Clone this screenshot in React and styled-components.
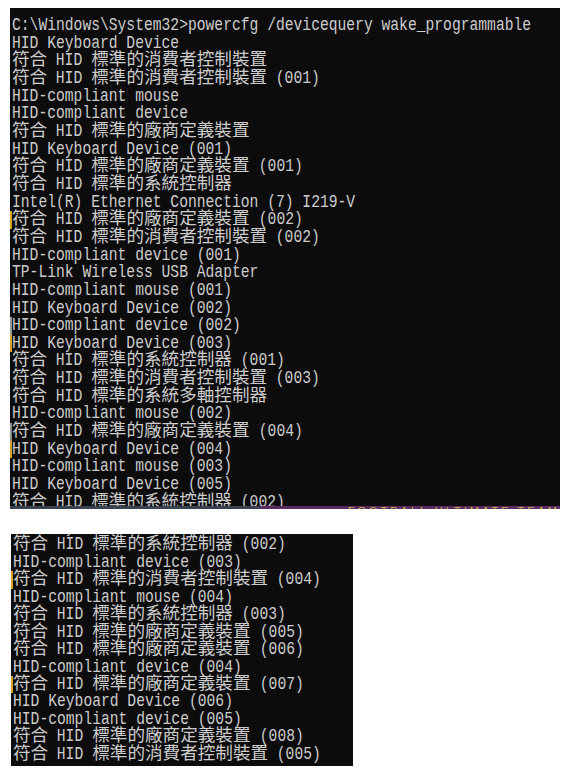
import styled, { createGlobalStyle } from "styled-components";

const CELL = 8.8;

const GlobalStyle = createGlobalStyle`
  html, body {
    margin: 0;
    padding: 0;
    background: #ffffff;
  }
`;

const topLines = [
  { text: "C:\\Windows\\System32>powercfg /devicequery wake_programmable" },
  { text: "HID Keyboard Device" },
  { text: "符合 HID 標準的消費者控制裝置" },
  { text: "符合 HID 標準的消費者控制裝置 (001)" },
  { text: "HID-compliant mouse" },
  { text: "HID-compliant device" },
  { text: "符合 HID 標準的廠商定義裝置" },
  { text: "HID Keyboard Device (001)" },
  { text: "符合 HID 標準的廠商定義裝置 (001)" },
  { text: "符合 HID 標準的系統控制器" },
  { text: "Intel(R) Ethernet Connection (7) I219-V" },
  { text: "符合 HID 標準的廠商定義裝置 (002)", mark: "#d9a21c" },
  { text: "符合 HID 標準的消費者控制裝置 (002)" },
  { text: "HID-compliant device (001)" },
  { text: "TP-Link Wireless USB Adapter" },
  { text: "HID-compliant mouse (001)" },
  { text: "HID Keyboard Device (002)" },
  { text: "HID-compliant device (002)", mark: "#9a9a9a" },
  { text: "HID Keyboard Device (003)", mark: "#d9a21c" },
  { text: "符合 HID 標準的系統控制器 (001)" },
  { text: "符合 HID 標準的消費者控制裝置 (003)" },
  { text: "符合 HID 標準的系統多軸控制器" },
  { text: "HID-compliant mouse (002)" },
  { text: "符合 HID 標準的廠商定義裝置 (004)", mark: "#8c8c8c" },
  { text: "HID Keyboard Device (004)", mark: "#d9a21c" },
  { text: "HID-compliant mouse (003)" },
  { text: "HID Keyboard Device (005)" },
  { text: "符合 HID 標準的系統控制器 (002)" },
];

const bottomLines = [
  { text: "HID Keyboard Device (005)" },
  { text: "符合 HID 標準的系統控制器 (002)" },
  { text: "HID-compliant device (003)" },
  { text: "符合 HID 標準的消費者控制裝置 (004)", mark: "#d9a21c" },
  { text: "HID-compliant mouse (004)" },
  { text: "符合 HID 標準的系統控制器 (003)" },
  { text: "符合 HID 標準的廠商定義裝置 (005)" },
  { text: "符合 HID 標準的廠商定義裝置 (006)" },
  { text: "HID-compliant device (004)" },
  { text: "符合 HID 標準的廠商定義裝置 (007)", mark: "#d9a21c" },
  { text: "HID Keyboard Device (006)" },
  { text: "HID-compliant device (005)" },
  { text: "符合 HID 標準的廠商定義裝置 (008)" },
  { text: "符合 HID 標準的消費者控制裝置 (005)" },
];

// split a line into runs of wide (CJK) and narrow (ascii) characters
const splitRuns = (text) => {
  const runs = [];
  const re = /[\u3000-\u9fff\uff00-\uffef]+/g;
  let last = 0;
  let m;
  while ((m = re.exec(text)) !== null) {
    if (m.index > last) runs.push({ wide: false, s: text.slice(last, m.index) });
    runs.push({ wide: true, s: m[0] });
    last = m.index + m[0].length;
  }
  if (last < text.length) runs.push({ wide: false, s: text.slice(last) });
  return runs;
};

const ConsoleLine = ({ text, mark, pitch }) => (
  <Line $mark={mark} $pitch={pitch}>
    {splitRuns(text).map((r, i) =>
      r.wide ? (
        <Han key={i}>{r.s}</Han>
      ) : (
        <Narrow key={i} $n={r.s.length}>
          {r.s}
        </Narrow>
      )
    )}
  </Line>
);

const App = () => {
  return (
    <Page>
      <GlobalStyle />
      <TopShot>
        <Screen $pad="9px">
          {topLines.map((l, i) => (
            <ConsoleLine key={i} text={l.text} mark={l.mark} pitch={17.67} />
          ))}
        </Screen>
        <Taskbar>
          <TaskLeft />
          <TaskRight>FOOTBALL ULTIMATE TEAM</TaskRight>
        </Taskbar>
      </TopShot>

      <BottomShot>
        <Screen $pad="0" $shift="-15px">
          {bottomLines.map((l, i) => (
            <ConsoleLine key={i} text={l.text} mark={l.mark} pitch={17.45} />
          ))}
        </Screen>
      </BottomShot>
    </Page>
  );
};

const Page = styled.div`
  display: flex;
  flex-direction: column;
  align-items: flex-start;
  width: 567px;
  min-height: 782px;
`;

const TopShot = styled.div`
  margin: 8px 0 0 10px;
  width: 550px;
  display: flex;
  flex-direction: column;
`;

const BottomShot = styled.div`
  margin: 25px 0 0 11px;
  width: 342px;
  height: 232px;
  background: #0c0c0c;
  overflow: hidden;
`;

const Screen = styled.div`
  background: #0c0c0c;
  height: ${(p) => (p.$shift ? "auto" : "498px")};
  overflow: hidden;
  padding-top: ${(p) => p.$pad};
  margin-top: ${(p) => p.$shift || "0"};
  box-sizing: border-box;
`;

const Line = styled.div`
  height: ${(p) => p.$pitch}px;
  line-height: ${(p) => p.$pitch}px;
  border-left: 2px solid ${(p) => p.$mark || "transparent"};
  font-family: "Liberation Mono", monospace;
  font-size: 17.6px;
  color: #cccccc;
  white-space: pre;
`;

const Narrow = styled.span`
  display: inline-block;
  width: ${(p) => p.$n * CELL}px;
  transform: scaleX(0.8333);
  transform-origin: 0 0;
  white-space: pre;
  font-family: "Liberation Mono", monospace;
`;

const Han = styled.span`
  font-family: "Noto Sans CJK TC", "Noto Sans CJK JP", sans-serif;
  font-size: 17.6px;
  line-height: 0;
  letter-spacing: 0;
`;

const Taskbar = styled.div`
  display: flex;
  height: 3px;
  overflow: hidden;
`;

const TaskLeft = styled.div`
  width: 358px;
  background: #3a4152;
`;

const TaskRight = styled.div`
  flex: 1;
  background: #5a2a62;
  color: #c9b23a;
  font-family: "Liberation Sans", sans-serif;
  font-size: 11px;
  letter-spacing: 3px;
  line-height: 10px;
  padding-left: 88px;
  white-space: nowrap;
`;

export default App;
